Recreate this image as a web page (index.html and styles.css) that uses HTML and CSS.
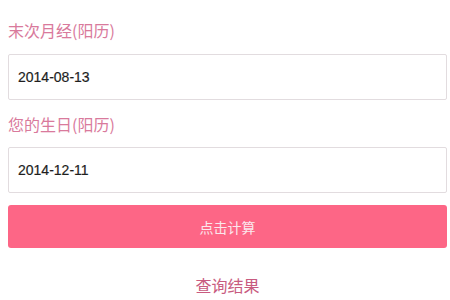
FILE: index.html
```html
<!DOCTYPE html>
<html lang="zh-CN">
<head>
<meta charset="utf-8">
<title>预产期计算</title>
<link rel="stylesheet" href="styles.css">
</head>
<body>
<div class="form">
  <div class="label label-first">末次月经(阳历)</div>
  <div class="field">2014-08-13</div>
  <div class="label">您的生日(阳历)</div>
  <div class="field">2014-12-11</div>
  <div class="btn">点击计算</div>
  <div class="result">查询结果</div>
</div>
</body>
</html>
```
FILE: styles.css
```css
html, body {
  margin: 0;
  padding: 0;
  background: #ffffff;
}
body {
  font-family: "Liberation Sans", "Noto Sans CJK SC", sans-serif;
}
.form {
  display: flex;
  flex-direction: column;
  padding: 20px 3px 0 8px;
}
.label {
  font-family: "Noto Sans CJK SC", sans-serif;
  font-size: 16px;
  line-height: 20px;
  height: 20px;
  color: #d97a9c;
  margin-top: 14px;
  margin-bottom: 13px;
}
.label-first {
  margin-top: 0;
  margin-bottom: 14px;
}
.field {
  height: 46px;
  box-sizing: border-box;
  border: 1px solid #e2dcdf;
  border-radius: 2px;
  background: #fff;
  display: flex;
  align-items: center;
  padding-left: 9px;
  font-size: 14px;
  color: #1e1e1e;
  -webkit-text-stroke: 0.2px #1e1e1e;
}
.btn {
  margin-top: 12px;
  height: 43px;
  border-radius: 3px;
  background: #fd6686;
  color: #fbe6ec;
  font-family: "Noto Sans CJK SC", sans-serif;
  font-size: 14px;
  display: flex;
  align-items: center;
  justify-content: center;
}
.result {
  margin-top: 26px;
  text-align: center;
  font-family: "Noto Sans CJK SC", sans-serif;
  font-size: 16px;
  line-height: 22px;
  color: #c85b80;
}
```
